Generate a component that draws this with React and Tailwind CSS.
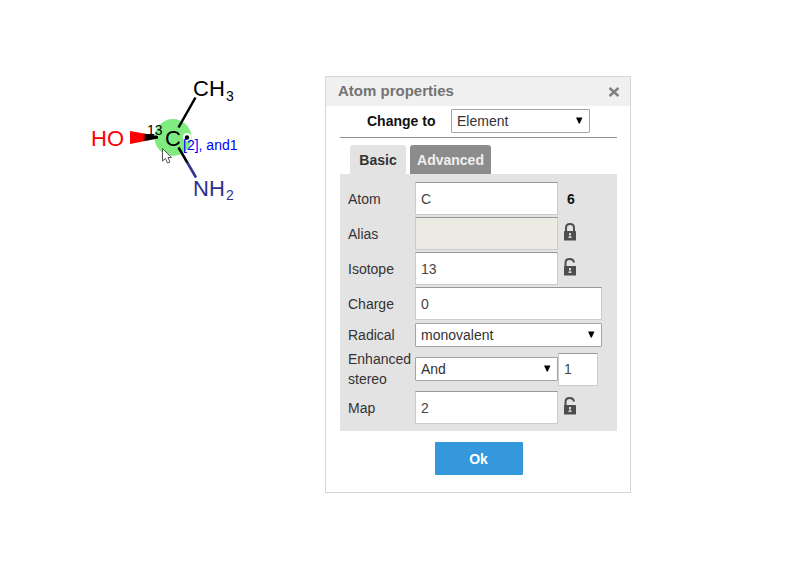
import React from 'react';

function Molecule() {
  return (
    <svg
      className="ml-20 h-[145px] w-[170px] shrink-0 font-['Liberation_Sans',Arial,sans-serif]"
      viewBox="80 76 170 145"
      role="img"
      aria-label="Molecule"
    >
      <defs>
        <linearGradient id="wedge" x1="130" x2="158" y1="0" y2="0" gradientUnits="userSpaceOnUse">
          <stop offset="0.45" stopColor="#ff0000" />
          <stop offset="0.6" stopColor="#000000" />
        </linearGradient>
        <linearGradient id="amine" x1="179" y1="148" x2="195" y2="177" gradientUnits="userSpaceOnUse">
          <stop offset="0.45" stopColor="#000000" />
          <stop offset="0.55" stopColor="#30308f" />
        </linearGradient>
      </defs>
      <circle cx="173" cy="137.5" r="18.500" fill="#80ec80" />
      <path d="M130 131 L158 136 V138.500 L130 144 Z" fill="url(#wedge)" />
      <path d="M195.500 97.500 L178.500 127.500" stroke="#000000" strokeWidth="2.5" />
      <path d="M178.500 147.500 L196 177.500" stroke="url(#amine)" strokeWidth="2.5" />
      <text x="193" y="96" fontSize="22" fill="#000000">CH</text>
      <text x="226" y="101" fontSize="14" fill="#000000">3</text>
      <text x="91" y="146" fontSize="22" fill="#ff0000">HO</text>
      <text x="193" y="196" fontSize="22" fill="#30308f">NH</text>
      <text x="226" y="200" fontSize="14" fill="#30308f">2</text>
      <text x="147" y="135" fontSize="14" fill="#000000">13</text>
      <text x="165" y="146" fontSize="22" fill="#000000">C</text>
      <circle cx="187" cy="137" r="4" fill="#ffffff" />
      <circle cx="187" cy="137.500" r="2.2" fill="#000000" />
      <text x="183" y="150" fontSize="14" fill="#0000ff">[2], and1</text>
      <path
        d="M162.500 148.500 V161 L165.500 158.500 L167.500 163 L170 162 L168 157.500 H171.500 Z"
        fill="#ffffff"
        stroke="#444444"
        strokeWidth="0.9"
      />
    </svg>
  );
}

function Lock({ open, label }) {
  return (
    <button type="button" aria-label={label} className="mb-1 ml-[6px] h-[18px] w-3">
      <svg viewBox="0 0 12 18" className="h-[18px] w-3">
        <path
          d={open ? 'M1.500 9 V5 Q1.500 1 5.500 1 Q9.500 1 10 4.500' : 'M2 9 V5 Q2 1 6 1 Q10 1 10 5 V9'}
          fill="none"
          stroke="#4d4d4d"
          strokeWidth="2"
        />
        <rect y="8" width="12" height="9.500" rx="0.500" fill="#4d4d4d" />
        <path d="M5 10 h2 v2 h-0.500 v1.500 h1 v1.500 h-3 v-1.500 h1 v-1.500 h-0.500 Z" fill="#d8d8d8" />
      </svg>
    </button>
  );
}

function Select({ id, width, options }) {
  return (
    <div className={`relative h-6 ${width}`}>
      <select
        id={id}
        className="block h-6 w-full appearance-none rounded-[1px] border border-[#a5a5a5] bg-white px-[5px] text-sm leading-5 text-[#333333]"
      >
        {options.map((o) => (
          <option key={o}>{o}</option>
        ))}
      </select>
      <svg viewBox="0 0 8 7" className="pointer-events-none absolute top-2 right-[7px] h-[7px] w-2">
        <path d="M1 0.500 H7.500 L4.750 6.500 H3.750 Z" fill="#000000" />
      </svg>
    </div>
  );
}

function Field({ id, value, width = 'w-[143px]', disabled = false, label }) {
  return (
    <input
      id={id}
      aria-label={label}
      type="text"
      defaultValue={value}
      disabled={disabled}
      className={`h-[33px] border border-[#cccccc] border-t-[#999999] px-[5px] text-sm text-[#444444] ${disabled ? 'bg-[#ebebe4]' : 'bg-white'} ${width}`}
    />
  );
}

function Row({ id, label, height = 'h-[33px]', children }) {
  return (
    <div className={`flex items-center ${height}`}>
      <label htmlFor={id} className="w-[67px] shrink-0 text-sm leading-5 text-[#333333]">
        {label}
      </label>
      {children}
    </div>
  );
}

function AtomDialog() {
  return (
    <form
      role="dialog"
      aria-labelledby="dialog-title"
      className="w-[306px] shrink-0 border border-[#d5d5d5] bg-white pb-[17px]"
      onSubmit={(e) => e.preventDefault()}
    >
      <header className="flex h-[29px] items-center justify-between bg-[#f0f0f0] pr-[11px] pl-3">
        <h1 id="dialog-title" className="text-[15px] font-bold text-[#737373]">Atom properties</h1>
        <button type="button" aria-label="Close" className="h-[10px] w-[10px]">
          <svg viewBox="0 0 10 10" className="h-[10px] w-[10px]">
            <path d="M0.500 1 L9.500 9 M9.500 1 L0.500 9" stroke="#808080" strokeWidth="2.600" />
          </svg>
        </button>
      </header>
      <div className="mr-[13px] ml-[14px]">
        <div className="flex h-8 items-start border-b border-[#909090] pt-[3px] pl-[27px]">
          <label htmlFor="change-to" className="w-[84px] text-sm leading-6 font-bold text-[#111111]">
            Change to
          </label>
          <Select id="change-to" width="w-[139px]" options={['Element', 'Any atom', 'Atom list']} />
        </div>
        <div role="tablist" className="flex gap-1 pt-[7px] pl-[10px]">
          <button type="button" role="tab" aria-selected="true" className="h-[29px] w-14 rounded-t-[3px] bg-[#e3e3e3] text-sm font-bold text-[#333333]">
            Basic
          </button>
          <button type="button" role="tab" aria-selected="false" className="h-[29px] w-[81px] rounded-t-[3px] bg-[#8c8c8c] text-sm font-bold text-[#f0f0f0]">
            Advanced
          </button>
        </div>
        <div role="tabpanel" aria-label="Basic" className="flex flex-col gap-[2px] bg-[#e3e3e3] pt-2 pb-[7px] pl-2">
          <Row id="atom" label="Atom">
            <Field id="atom" value="C" />
            <output htmlFor="atom" className="ml-[9px] text-sm font-bold text-[#111111]">6</output>
          </Row>
          <Row id="alias" label="Alias">
            <Field id="alias" value="" disabled />
            <Lock label="Unlock alias" />
          </Row>
          <Row id="isotope" label="Isotope">
            <Field id="isotope" value="13" />
            <Lock open label="Lock isotope" />
          </Row>
          <Row id="charge" label="Charge">
            <Field id="charge" value="0" width="w-[187px]" />
          </Row>
          <Row id="radical" label="Radical" height="h-[25px]">
            <Select id="radical" width="w-[187px]" options={['monovalent', 'divalent', 'trivalent']} />
          </Row>
          <Row id="stereo" label="Enhanced stereo" height="h-10">
            <Select id="stereo" width="w-[143px]" options={['And', 'Or', 'Absolute']} />
            <Field id="stereo-group" label="Stereo group" value="1" width="w-10" />
          </Row>
          <Row id="map" label="Map">
            <Field id="map" value="2" />
            <Lock open label="Lock map" />
          </Row>
        </div>
        <div className="flex justify-center pt-[11px]">
          <button type="submit" className="h-[33px] w-[88px] rounded-[1px] bg-[#3598dc] text-sm font-bold text-white">
            Ok
          </button>
        </div>
      </div>
    </form>
  );
}

export default function App() {
  return (
    <main className="flex min-h-screen items-start gap-[75px] bg-white pt-[76px] font-['Liberation_Sans',Arial,sans-serif]">
      <Molecule />
      <AtomDialog />
    </main>
  );
}
